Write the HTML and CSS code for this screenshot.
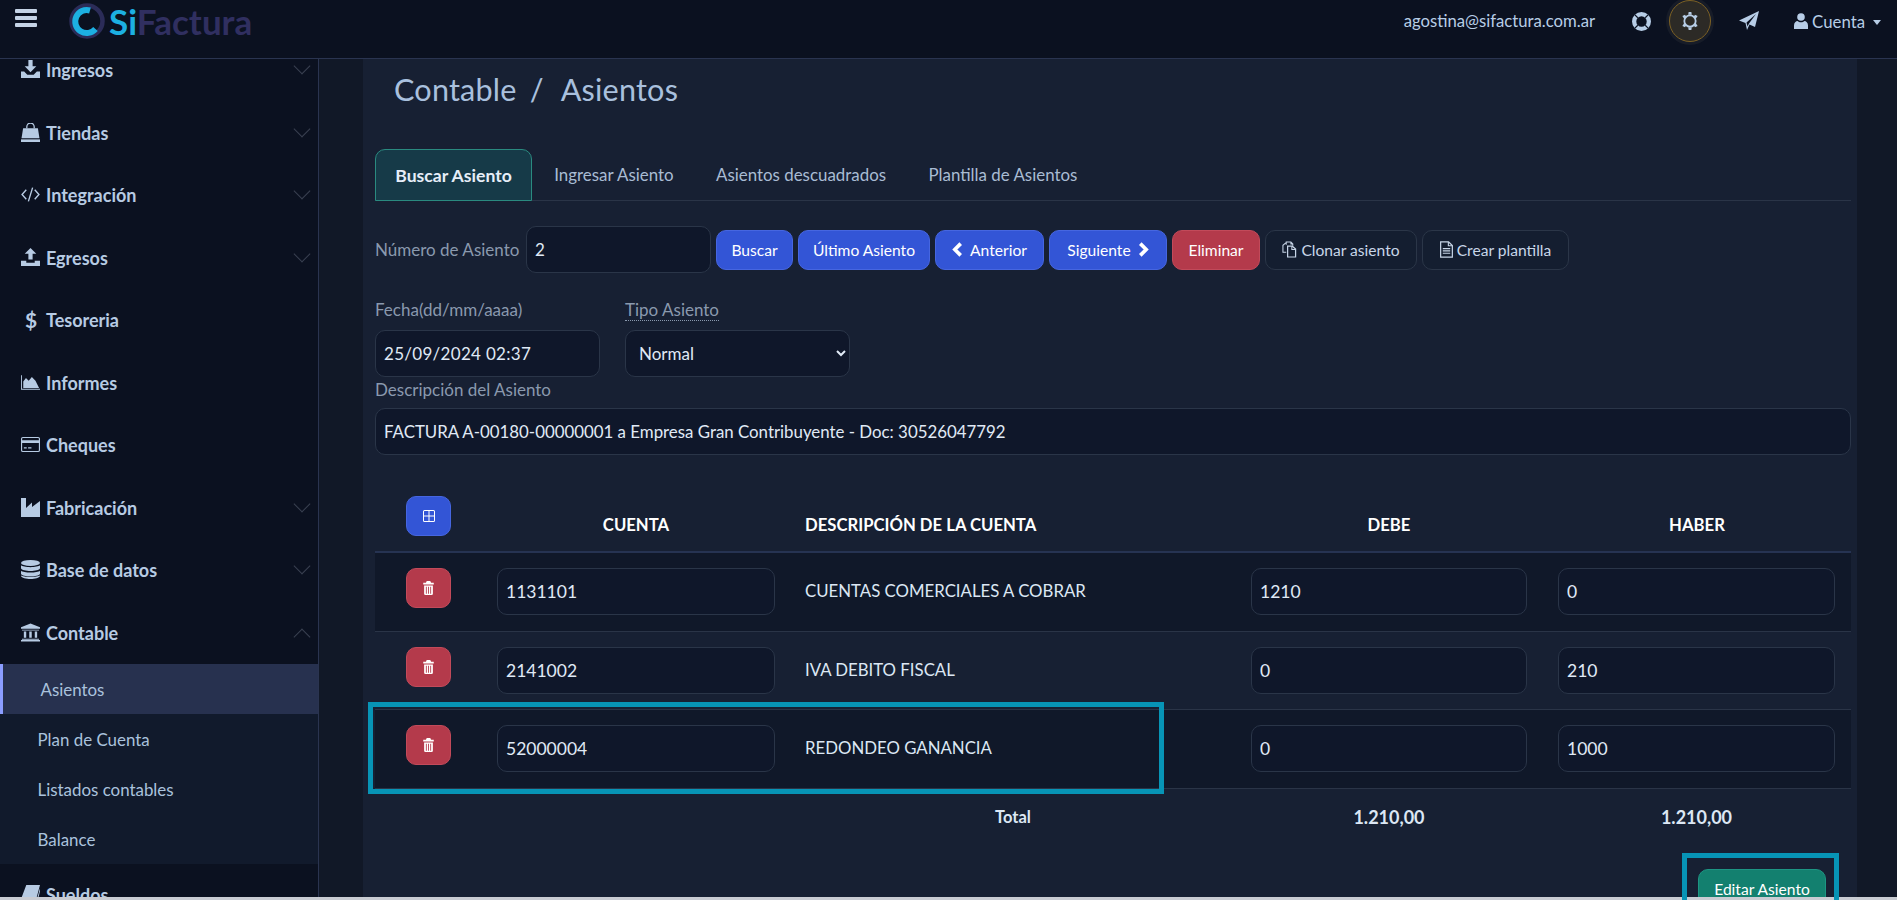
FILE: index.html
```html
<!DOCTYPE html>
<html lang="es">
<head>
<meta charset="utf-8">
<title>SiFactura - Asientos</title>
<link rel="stylesheet" href="styles.css">
</head>
<body>
<svg class="sprite" xmlns="http://www.w3.org/2000/svg">
  <symbol id="i-download" viewBox="0 0 18 18"><path d="M7 0h4v6h3.500L9 11.500 3.500 6H7z"/><path d="M0 11h3l3 3h6l3-3h3v6H0z"/></symbol>
  <symbol id="i-upload" viewBox="0 0 18 18"><path d="M9 0l5.500 5.500H11V11H7V5.500H3.500z"/><path d="M0 12h5v2h8v-2h5v5H0z"/></symbol>
  <symbol id="i-bag" viewBox="0 0 18 18"><path d="M5.500 5V3.500a3.500 3.500 0 0 1 7 0V5" fill="none" stroke="currentColor" stroke-width="1.200"/><path d="M2 5h14l1.500 9.500H.5z"/><path d="M0 15.500h18V18H0z"/></symbol>
  <symbol id="i-code" viewBox="0 0 18 18"><path d="M5 4.500L1 9l4 4.500M13 4.500L17 9l-4 4.500M11 2.500L7 15.500" fill="none" stroke="currentColor" stroke-width="1.300"/></symbol>
  <symbol id="i-area" viewBox="0 0 21 16"><path d="M0 0h1v15h20v1H0z"/><path d="M2.500 14V7l3-4 3 3 3.500-4 4 4 4 8z"/></symbol>
  <symbol id="i-card" viewBox="0 0 20 16"><path d="M2 0h16a2 2 0 0 1 2 2v12a2 2 0 0 1-2 2H2a2 2 0 0 1-2-2V2a2 2 0 0 1 2-2zm-.8 2v1.500h17.600V2q0-.8-.8-.8H2q-.8 0-.8.8zm0 4.500V14q0 .8.8.8h16q.8 0 .8-.8V6.500zM3 11h3v1.300H3zm4.500 0H11v1.300H7.500z"/></symbol>
  <symbol id="i-factory" viewBox="0 0 19 19"><path d="M0 0h5v10l6-5.500V9l8-6v16H0z"/></symbol>
  <symbol id="i-db" viewBox="0 0 16 16"><ellipse cx="8" cy="2.500" rx="8" ry="2.500"/><path d="M0 4.500c2 2 14 2 16 0v2.500c-1 3-15 3-16 0zM0 9c2 2 14 2 16 0v2.500c-1 3-15 3-16 0z"/><path d="M0 13c2 1.500 14 1.500 16 0v.5c-1 3.300-15 3.300-16 0z"/></symbol>
  <symbol id="i-bank" viewBox="0 0 20 19"><path d="M10 0l10 4v1.500H0V4z"/><path d="M1 6.500h18v1H1zM3 8.500h2.500V15H3zM8.700 8.500h2.600V15H8.700zM14.500 8.500H17V15h-2.500zM1 16h18v1H1zM0 17.500h20V19H0z"/></symbol>
  <symbol id="i-book" viewBox="0 0 18 18"><path d="M5 0h13l-3.500 13H3.500C2 13 1.500 15.500 3.500 15.500h11L18 3v3l-3 12H3C0 18-.5 15 .5 12z"/></symbol>
  <symbol id="i-ring" viewBox="0 0 20 20"><path fill-rule="evenodd" d="M10 0a10 10 0 1 0 0 20 10 10 0 0 0 0-20zm0 4.500a5.500 5.500 0 1 1 0 11 5.500 5.500 0 0 1 0-11z"/><path d="M2.800 2.800l3.300 3.300M17.200 2.800l-3.300 3.300M2.800 17.200l3.300-3.300M17.200 17.200l-3.300-3.300" stroke="#0b1120" stroke-width="1.300"/></symbol>
  <symbol id="i-gear" viewBox="0 0 20 20"><circle cx="10" cy="10" r="6.300" fill="none" stroke="currentColor" stroke-width="2"/><path d="M8.500 0h3l.5 3H8zM8 17h4l-.5 3h-3zM1.500 4.500l3-1.500 1.500 2.500-2.500 2zM14 5.500L15.500 3l3 1.500-2 3zM1.500 15.500l2-3 2.500 2L4.500 17zM14 14.500l2.500-2 2 3-3 1.500z"/></symbol>
  <symbol id="i-plane" viewBox="0 0 20 20"><path d="M20 0L16 16l-5.500-2.500L8 19l-1.500-7L0 9.500z"/><path d="M17 3L7.500 11.500l1 4 1.500-3z" fill="#0b1120"/></symbol>
  <symbol id="i-user" viewBox="0 0 14 16"><circle cx="7" cy="4" r="3.800"/><path d="M0 16v-3.500C0 9.500 2 8 3.500 8c1 1 2 1.300 3.500 1.300S9.500 9 10.500 8C12 8 14 9.500 14 12.500V16z"/></symbol>
  <symbol id="i-trash" viewBox="0 0 12 16"><path fill-rule="evenodd" d="M4 0h4l1 2h3v2H0V2h3zM1 5h10v9.500a1.500 1.500 0 0 1-1.500 1.500h-7A1.500 1.500 0 0 1 1 14.500zm2 1.500v8h1v-8zm2.500 0v8h1v-8zm2.500 0v8h1v-8z"/></symbol>
  <symbol id="i-plus" viewBox="0 0 12 12"><path fill-rule="evenodd" d="M1.500 0h9A1.500 1.500 0 0 1 12 1.500v9a1.500 1.500 0 0 1-1.500 1.500h-9A1.500 1.500 0 0 1 0 10.500v-9A1.500 1.500 0 0 1 1.500 0zM1 5.500h4.500V1H1.500q-.5 0-.5.5zm5.500 0H11v-4q0-.5-.5-.5h-4zM1 6.500v4q0 .5.5.5h4V6.500zm5.500 0V11h4q.5 0 .5-.5v-4z"/></symbol>
  <symbol id="i-files" viewBox="0 0 16 18"><path d="M4.500 4V1h5l2 2v2M9.500 1v2h2M4.500 12H1V4.500L4 2" fill="none" stroke="currentColor" stroke-width="1.100"/><path d="M6 5.500h5l3.500 3v8.500H6z" fill="none" stroke="currentColor" stroke-width="1.300"/><path d="M10.500 5.500v3.500h4" fill="none" stroke="currentColor" stroke-width="1.100"/></symbol>
  <symbol id="i-file" viewBox="0 0 14 18"><path d="M.7.7h8.500l4.100 4.100v12.500H.7z" fill="none" stroke="currentColor" stroke-width="1.300"/><path d="M9 1v4h4M3 8h8M3 10.500h8M3 13h8" fill="none" stroke="currentColor" stroke-width="1.200"/></symbol>
</svg>

<div class="app">
  <header class="topbar">
    <button class="burger" type="button" aria-label="Menú"><span></span><span></span><span></span></button>
    <a class="logo">
      <svg class="logo-mark" viewBox="0 0 36 36"><circle cx="18" cy="18" r="15.500" fill="none" stroke="#2b2c58" stroke-width="4.500"/><path d="M21 7.500A11.500 11.500 0 1 0 26.500 26" fill="none" stroke="#1cb0e2" stroke-width="6"/></svg>
      <span class="logo-text"><span class="logo-si">Si</span>Factura</span>
    </a>
    <div class="topbar-right">
      <span class="email">agostina@sifactura.com.ar</span>
      <svg class="ti ti-ring"><use href="#i-ring"/></svg>
      <span class="gear-wrap"><svg class="ti ti-gear"><use href="#i-gear"/></svg></span>
      <svg class="ti ti-plane"><use href="#i-plane"/></svg>
      <svg class="ti ti-user"><use href="#i-user"/></svg>
      <span class="cuenta">Cuenta</span>
      <span class="caret"></span>
    </div>
  </header>

  <div class="body-row">
    <aside class="sidebar">
      <nav class="menu">
        <a class="mi has-sub"><svg class="mi-ic"><use href="#i-download"/></svg><span>Ingresos</span></a>
        <a class="mi has-sub"><svg class="mi-ic"><use href="#i-bag"/></svg><span>Tiendas</span></a>
        <a class="mi has-sub"><svg class="mi-ic"><use href="#i-code"/></svg><span>Integración</span></a>
        <a class="mi has-sub"><svg class="mi-ic"><use href="#i-upload"/></svg><span>Egresos</span></a>
        <a class="mi"><span class="mi-ic mi-dollar">$</span><span>Tesoreria</span></a>
        <a class="mi"><svg class="mi-ic"><use href="#i-area"/></svg><span>Informes</span></a>
        <a class="mi"><svg class="mi-ic"><use href="#i-card"/></svg><span>Cheques</span></a>
        <a class="mi has-sub"><svg class="mi-ic"><use href="#i-factory"/></svg><span>Fabricación</span></a>
        <a class="mi has-sub"><svg class="mi-ic"><use href="#i-db"/></svg><span>Base de datos</span></a>
        <a class="mi has-sub open"><svg class="mi-ic"><use href="#i-bank"/></svg><span>Contable</span></a>
        <div class="submenu">
          <a class="si active">Asientos</a>
          <a class="si">Plan de Cuenta</a>
          <a class="si">Listados contables</a>
          <a class="si">Balance</a>
        </div>
        <a class="mi"><svg class="mi-ic"><use href="#i-book"/></svg><span>Sueldos</span></a>
      </nav>
    </aside>

    <main class="main">
      <section class="card">
        <h1 class="page-title">Contable <span class="sep">/</span> Asientos</h1>

        <ul class="tabs">
          <li class="tab active">Buscar Asiento</li>
          <li class="tab">Ingresar Asiento</li>
          <li class="tab">Asientos descuadrados</li>
          <li class="tab">Plantilla de Asientos</li>
        </ul>

        <div class="search-row">
          <label class="lbl lbl-inline">Número de Asiento</label>
          <input class="field field-num" value="2">
          <button class="btn blue w-buscar" type="button">Buscar</button>
          <button class="btn blue w-ultimo" type="button">Último Asiento</button>
          <button class="btn blue w-ant" type="button"><svg class="chev" viewBox="0 0 10 14"><path d="M8 1.500L2.500 7 8 12.500"/></svg>Anterior</button>
          <button class="btn blue w-sig" type="button">Siguiente<svg class="chev" viewBox="0 0 10 14"><path d="M2 1.500L7.500 7 2 12.500"/></svg></button>
          <button class="btn red w-del" type="button">Eliminar</button>
          <button class="btn ghost w-clon" type="button"><svg class="btn-ic"><use href="#i-files"/></svg>Clonar asiento</button>
          <button class="btn ghost w-plant" type="button"><svg class="btn-ic btn-ic-file"><use href="#i-file"/></svg>Crear plantilla</button>
        </div>

        <div class="meta-row">
          <div class="meta-col">
            <label class="lbl">Fecha(dd/mm/aaaa)</label>
            <input class="field field-date" value="25/09/2024 02:37">
          </div>
          <div class="meta-col">
            <label class="lbl"><abbr class="hint">Tipo Asiento</abbr></label>
            <select class="field field-select"><option>Normal</option></select>
          </div>
        </div>

        <label class="lbl lbl-desc">Descripción del Asiento</label>
        <input class="field field-wide" value="FACTURA A-00180-00000001 a Empresa Gran Contribuyente - Doc: 30526047792">

        <table class="grid">
          <colgroup><col class="c1"><col class="c2"><col class="c3"><col class="c4"><col class="c5"></colgroup>
          <thead>
            <tr>
              <th class="th-add"><button class="btn blue icon-btn" type="button"><svg class="add-ic"><use href="#i-plus"/></svg></button></th>
              <th>CUENTA</th>
              <th class="left">DESCRIPCIÓN DE LA CUENTA</th>
              <th>DEBE</th>
              <th>HABER</th>
            </tr>
          </thead>
          <tbody>
            <tr class="odd">
              <td class="td-del"><button class="btn red icon-btn" type="button"><svg class="trash"><use href="#i-trash"/></svg></button></td>
              <td><input class="field cell" value="1131101"></td>
              <td class="desc">CUENTAS COMERCIALES A COBRAR</td>
              <td><input class="field cell" value="1210"></td>
              <td><input class="field cell" value="0"></td>
            </tr>
            <tr>
              <td class="td-del"><button class="btn red icon-btn" type="button"><svg class="trash"><use href="#i-trash"/></svg></button></td>
              <td><input class="field cell" value="2141002"></td>
              <td class="desc">IVA DEBITO FISCAL</td>
              <td><input class="field cell" value="0"></td>
              <td><input class="field cell" value="210"></td>
            </tr>
            <tr class="odd">
              <td class="td-del"><button class="btn red icon-btn" type="button"><svg class="trash"><use href="#i-trash"/></svg></button></td>
              <td><input class="field cell" value="52000004"></td>
              <td class="desc">REDONDEO GANANCIA</td>
              <td><input class="field cell" value="0"></td>
              <td><input class="field cell" value="1000"></td>
            </tr>
          </tbody>
          <tfoot>
            <tr>
              <td colspan="2"></td>
              <td class="total total-label">Total</td>
              <td class="total">1.210,00</td>
              <td class="total">1.210,00</td>
            </tr>
          </tfoot>
        </table>

        <div class="actions"><button class="btn green w-edit" type="button">Editar Asiento</button></div>
      </section>
    </main>
  </div>
</div>
<div class="strip"></div>

<div class="mark mark-row"></div>
<div class="mark mark-btn"></div>
</body>
</html>
```

FILE: styles.css
```css
* { box-sizing: border-box; }
html, body { margin: 0; height: 900px; overflow: hidden; }
body {
  position: relative;
  background: #111827;
  color: #c8d6e8;
  font-family: "Lato", "Liberation Sans", sans-serif;
  font-size: 17px;
}
.sprite { display: none; }
.app { height: 897px; display: flex; flex-direction: column; overflow: hidden; }
.strip { height: 3px; background: #c9ccd3; }

/* top bar */
.topbar {
  flex: none;
  height: 59px;
  background: #0b1120;
  border-bottom: 1px solid #2a3450;
  display: flex;
  align-items: flex-start;
  padding: 0 16px 0 15px;
}
.burger {
  width: 22px; height: 18px; margin-top: 9px; padding: 0;
  background: none; border: 0;
  display: flex; flex-direction: column; justify-content: space-between;
}
.burger span { display: block; height: 4px; background: #c5d3e6; border-radius: 1px; }
.logo { display: flex; align-items: center; height: 42px; margin-left: 32px; }
.logo-mark { width: 36px; height: 36px; }
.logo-text { margin-left: 4px; font-size: 35px; font-weight: 700; color: #302f60; }
.logo-si { color: #1cb0e2; }
.topbar-right { margin-left: auto; height: 42px; display: flex; align-items: center; color: #b7cde6; }
.email { font-size: 16.700px; }
.ti { fill: #b7cde6; display: block; }
.ti-ring { width: 19px; height: 19px; margin-left: 37px; }
.gear-wrap {
  width: 42px; height: 42px; margin-left: 18px; border-radius: 50%;
  background: #2c2a26; border: 1px solid #7d6124;
  box-shadow: 0 0 0 3px #171c28;
  display: flex; align-items: center; justify-content: center;
}
.ti-gear { width: 18px; height: 18px; }
.ti-plane { width: 20px; height: 20px; margin-left: 28px; }
.ti-user { width: 14px; height: 16px; margin-left: 35px; }
.cuenta { margin-left: 4px; font-size: 16.800px; }
.caret {
  margin-left: 8px; width: 0; height: 0; margin-top: 2px;
  border-left: 4.500px solid transparent; border-right: 4.500px solid transparent;
  border-top: 5px solid #b7cde6;
}

/* layout */
.body-row { flex: 1; min-height: 0; display: flex; }
.sidebar {
  flex: none; width: 319px;
  background: #0b1120;
  border-right: 1px solid #2a3450;
  overflow: hidden;
}
.menu { margin-top: -20px; }
.mi {
  position: relative;
  height: 62.500px;
  display: flex; align-items: center;
  padding-left: 46px;
  color: #b7cbe3;
  font-weight: 700;
  font-size: 18px;
}
.mi-ic {
  position: absolute; left: 21px; top: 21px;
  width: 19px; height: 19px;
  fill: #b7cbe3;
}
.mi-dollar { left: 25px; top: 19px; font-size: 21px; line-height: 24px; }
.has-sub::after {
  content: "";
  position: absolute; right: 10px; top: 21px;
  width: 11px; height: 11px;
  border-right: 1px solid #3a4150; border-bottom: 1px solid #3a4150;
  transform: rotate(45deg);
}
.has-sub.open::after { top: 29px; transform: rotate(225deg); }
.submenu { background: #111a2c; }
.si {
  display: flex; align-items: center;
  height: 50px; padding-left: 37.500px;
  font-size: 16.900px; color: #aac2dd;
}
.si.active { background: #27314f; border-left: 3px solid #8b9dff; }

.main { flex: 1; min-width: 0; padding: 0 40px 0 44px; }
.card { height: 100%; background: #172033; padding: 0 6px 0 12px; overflow: hidden; }

.page-title {
  margin: 0; height: 90px; padding: 6px 0 0 19px;
  font-size: 30.600px; font-weight: 400; line-height: 50px;
  color: #a9c0de; letter-spacing: .2px;
}
.sep { margin: 0 10px 0 5px; }

/* tabs */
.tabs {
  list-style: none; margin: 0; padding: 0;
  display: flex; height: 52px;
  border-bottom: 1px solid #2a3447;
}
.tab {
  display: flex; align-items: center;
  padding: 0 21.200px;
  color: #a9bcd3; font-size: 16.900px;
}
.tab.active {
  width: 157px; margin: 0 1px -1px 0;
  padding: 0; justify-content: center;
  background: #163a48;
  border: 1px solid #2a8a80;
  border-radius: 10px 10px 0 0;
  color: #e6eef8; font-weight: 700; font-size: 17.600px;
}

/* form */
.search-row { margin-top: 25px; display: flex; align-items: center; gap: 5px; }
.lbl { display: block; color: #8a99ae; font-size: 17px; line-height: 24px; }
.lbl-inline { width: 146px; white-space: nowrap; }
.field {
  height: 47px; padding: 0 8px;
  background: #0f172a;
  border: 1px solid #2a3548;
  border-radius: 10px;
  color: #e0eaf6;
  font: inherit;
  outline: 0;
}
.field-num { width: 185px; }
.field-date { letter-spacing: .3px; }
.btn {
  height: 40px; padding: 0;
  border-radius: 10px; border: 1px solid transparent;
  font: inherit; font-size: 15.600px;
  color: #fff;
  display: inline-flex; align-items: center; justify-content: center;
}
.blue { background: #3355d6; border-color: #4666e0; }
.red { background: #b43a4b; border-color: #c24a5a; }
.green { background: #13806f; border-color: #1d9583; }
.ghost { background: #141e30; border-color: #2b3648; color: #c8d6e8; }
.w-buscar { width: 77px; }
.w-ultimo { width: 132px; }
.w-ant { width: 109px; }
.w-sig { width: 118px; }
.w-del { width: 88px; }
.w-clon { width: 152px; }
.w-plant { width: 147px; }
.w-edit { width: 128px; }
.chev { width: 11px; height: 15px; fill: none; stroke: #fff; stroke-width: 3.400; }
.w-ant .chev { margin-right: 7px; }
.w-sig .chev { margin-left: 7px; }
.btn-ic { width: 15px; height: 17px; margin-right: 4px; fill: #c8d6e8; }
.btn-ic-file { width: 13px; }

.meta-row { margin-top: 25px; display: flex; gap: 25px; }
.meta-col { width: 225px; display: flex; flex-direction: column; gap: 8px; }
.meta-col .field { width: 100%; }
.hint { text-decoration: none; border-bottom: 1px dotted #8a99ae; }
.field-select { padding: 0 8px 0 9px; color-scheme: dark; }
.lbl-desc { margin-top: 1px; margin-bottom: 6px; }
.field-wide { display: block; width: 100%; font-size: 16.850px; }

/* table */
.grid {
  width: 1476px;
  table-layout: fixed;
  border-collapse: collapse;
}
.c1 { width: 106px; }
.c2 { width: 310px; }
.c3 { width: 444px; }
.c4, .c5 { width: 308px; }
.grid th {
  height: 97px;
  padding: 0 16px 14px;
  vertical-align: bottom;
  border-bottom: 2px solid #263352;
  color: #fff;
  font-size: 16.700px; font-weight: 700;
  line-height: 24px;
  text-align: center;
}
.grid th.left { text-align: left; padding-left: 14px; white-space: nowrap; }
.grid tbody td { padding: 15px 16px; border-bottom: 1px solid #2a3447; vertical-align: top; height: 78px; }
.grid tbody tr:first-child td, .grid tbody tr:last-child td { height: 79px; }
.grid td:last-child { padding-left: 15px; }
.grid tr.odd td { background: #101829; }
.grid th.th-add { padding: 0 0 15px 31px; text-align: left; vertical-align: top; }
.th-add .btn { margin-top: 41px; }
.grid td.td-del { padding-left: 31px; }
.icon-btn { width: 45px; }
.add-ic { width: 12px; height: 12px; fill: #fff; }
.trash { width: 11px; height: 14px; fill: #fff; }
.cell { width: 100%; display: block; font-size: 17.500px; }
.grid tbody td.desc { padding: 13px 16px 15px 14px; vertical-align: middle; color: #dce7f4; font-size: 16.800px; }
.grid tfoot td { height: 56px; padding: 16px; }
.grid td.total { text-align: center; color: #dce7f4; font-weight: 700; font-size: 18px; line-height: 24px; }
.grid td.total-label { font-size: 16.500px; }
.actions { margin-top: 24px; padding-right: 25px; display: flex; justify-content: flex-end; }

/* highlight marks drawn over the screenshot */
.mark { position: absolute; border: 5px solid #0794b6; }
.mark-row { left: 368px; top: 702px; width: 796px; height: 92px; }
.mark-btn { left: 1682px; top: 853px; width: 157px; height: 52px; }
```
